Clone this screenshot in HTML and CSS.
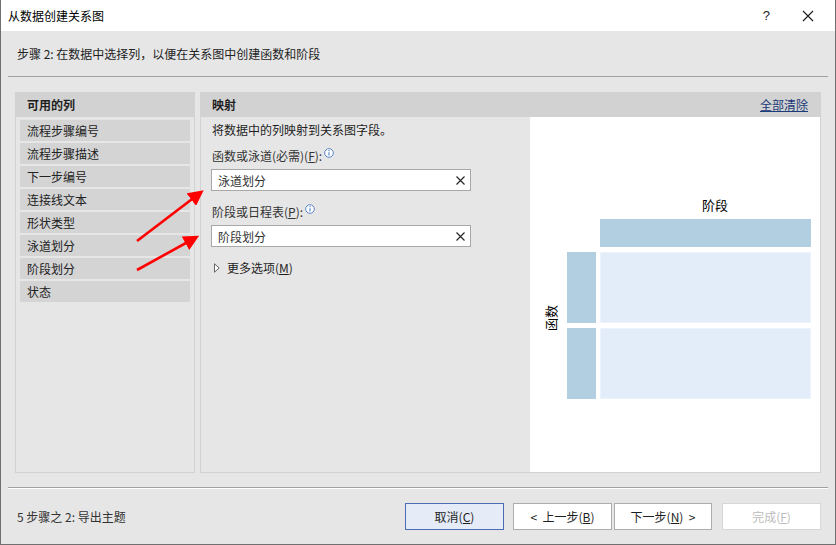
FILE: index.html
```html
<!DOCTYPE html>
<html lang="zh-CN">
<head>
<meta charset="utf-8">
<title>从数据创建关系图</title>
<link rel="stylesheet" href="styles.css">
</head>
<body>
<div class="window">
  <div class="titlebar">
    <div class="title">从数据创建关系图</div>
    <div class="title-actions">
      <span class="help">?</span>
      <svg class="close" width="12" height="12" viewBox="0 0 12 12"><path d="M1 1L11 11M11 1L1 11" stroke="#1a1a1a" stroke-width="1.1" fill="none"/></svg>
    </div>
  </div>
  <div class="step-header">步骤 2: 在数据中选择列，以便在关系图中创建函数和阶段</div>
  <div class="sep"></div>
  <div class="main">
    <div class="panel left-panel">
      <div class="panel-head">可用的列</div>
      <ul class="col-list">
        <li>流程步骤编号</li>
        <li>流程步骤描述</li>
        <li>下一步编号</li>
        <li>连接线文本</li>
        <li>形状类型</li>
        <li>泳道划分</li>
        <li>阶段划分</li>
        <li>状态</li>
      </ul>
    </div>
    <div class="panel right-panel">
      <div class="panel-head map-head"><span>映射</span><a class="clear-all" href="#">全部清除</a></div>
      <div class="map-body">
        <div class="mapping">
          <div class="desc">将数据中的列映射到关系图字段。</div>
          <div class="field-label">函数或泳道(必需)(<u>F</u>):<svg class="info" width="10" height="10" viewBox="0 0 10 10"><circle cx="5" cy="5" r="4.3" fill="#fff" stroke="#4a78c4" stroke-width="0.9"/><path d="M5 4.2V7.6" stroke="#4a78c4" stroke-width="1.1"/><circle cx="5" cy="2.7" r="0.65" fill="#4a78c4"/></svg></div>
          <div class="input"><span>泳道划分</span><svg width="9" height="9" viewBox="0 0 9 9"><path d="M0.5 0.5L8.5 8.5M8.5 0.5L0.5 8.5" stroke="#222" stroke-width="1.1"/></svg></div>
          <div class="field-label second">阶段或日程表(<u>P</u>):<svg class="info" width="10" height="10" viewBox="0 0 10 10"><circle cx="5" cy="5" r="4.3" fill="#fff" stroke="#4a78c4" stroke-width="0.9"/><path d="M5 4.2V7.6" stroke="#4a78c4" stroke-width="1.1"/><circle cx="5" cy="2.7" r="0.65" fill="#4a78c4"/></svg></div>
          <div class="input"><span>阶段划分</span><svg width="9" height="9" viewBox="0 0 9 9"><path d="M0.5 0.5L8.5 8.5M8.5 0.5L0.5 8.5" stroke="#222" stroke-width="1.1"/></svg></div>
          <div class="more"><svg width="6" height="10" viewBox="0 0 6 10"><path d="M0.5 0.8L5.2 5L0.5 9.2Z" fill="#fff" stroke="#555" stroke-width="0.9"/></svg><span>更多选项(<u>M</u>)</span></div>
        </div>
        <div class="preview">
          <div class="phase-label">阶段</div>
          <div class="grid">
            <div class="vlabel"><span>函数</span></div>
            <div class="bar top-bar"></div>
            <div class="bar side1"></div>
            <div class="cell cell1"></div>
            <div class="bar side2"></div>
            <div class="cell cell2"></div>
          </div>
        </div>
      </div>
    </div>
  </div>
  <div class="footer-sep"></div>
  <div class="footer">
    <div class="footer-text">5 步骤之 2: 导出主题</div>
    <div class="buttons">
      <button class="btn primary">取消(<u>C</u>)</button>
      <button class="btn back">&lt; &nbsp;上一步(<u>B</u>)</button>
      <button class="btn next">下一步(<u>N</u>) &nbsp;&gt;</button>
      <button class="btn disabled">完成(<u>F</u>)</button>
    </div>
  </div>
  <svg class="arrows" width="836" height="545" viewBox="0 0 836 545">
    <defs>
      <marker id="ah" markerWidth="6" markerHeight="6" refX="4.2" refY="3" orient="auto" markerUnits="strokeWidth">
        <path d="M0 0L6 3L0 6Z" fill="#ff0000"/>
      </marker>
    </defs>
    <line x1="137" y1="241" x2="200" y2="193" stroke="#ff0000" stroke-width="2.6" marker-end="url(#ah)"/>
    <line x1="137" y1="270" x2="195" y2="238" stroke="#ff0000" stroke-width="2.6" marker-end="url(#ah)"/>
  </svg>
</div>
</body>
</html>
```

FILE: styles.css
```css
* { box-sizing: border-box; }
html, body { margin: 0; padding: 0; }
body {
  width: 836px;
  height: 545px;
  overflow: hidden;
  font-family: "Noto Sans CJK SC", "Noto Sans", "Liberation Sans", sans-serif;
  font-size: 12px;
  color: #1e1e1e;
}
.window {
  position: relative;
  width: 836px;
  height: 545px;
  background: #e6e6e6;
  border-left: 1px solid #707070;
  border-right: 1px solid #707070;
  border-bottom: 1px solid #707070;
}
.titlebar {
  height: 31px;
  background: #fff;
  display: flex;
  align-items: center;
  justify-content: space-between;
  padding-left: 7px;
}
.title { font-size: 12px; line-height: 16px; color: #000; }
.title-actions { display: flex; align-items: center; }
.help { font-size: 13px; color: #222; margin-right: 32px; font-family: "Liberation Sans", sans-serif; }
.close { margin-right: 21px; }
.step-header {
  height: 45px;
  line-height: 45px;
  padding-left: 16px;
  color: #222;
}
.sep { margin: 0 7px; border-top: 1px solid #a0a0a0; }
.main {
  display: flex;
  margin-top: 15px;
  padding-left: 14px;
  height: 381px;
}
.panel { border: 1px solid #d2d2d2; height: 381px; }
.left-panel { width: 180px; }
.right-panel { width: 621px; margin-left: 5px; display: flex; flex-direction: column; }
.panel-head {
  height: 24px;
  line-height: 24px;
  background: #d2d2d2;
  font-weight: bold;
  padding-left: 11px;
  color: #1e1e1e;
}
.map-head { display: flex; justify-content: space-between; }
.clear-all {
  font-weight: normal;
  color: #1b3a78;
  text-decoration: underline;
  margin-right: 12px;
}
.col-list { list-style: none; margin: 3px 0 0 0; padding: 0 4px; }
.col-list li {
  height: 21px;
  line-height: 21px;
  background: #d4d4d4;
  margin-bottom: 2px;
  padding-left: 7px;
  color: #222;
}
.map-body { display: flex; flex: 1; }
.mapping { width: 329px; padding: 4px 0 0 11px; }
.desc { line-height: 18px; }
.field-label { line-height: 18px; margin-top: 8px; display: flex; align-items: center; color: #333; }
.field-label.second { margin-top: 12px; }
.field-label u { text-decoration: underline; }
.info { margin-left: 2px; margin-top: -6px; }
.input {
  width: 260px;
  height: 22px;
  margin-top: 4px;
  margin-left: -1px;
  background: #fff;
  border: 1px solid #a8a8a8;
  display: flex;
  align-items: center;
  justify-content: space-between;
  padding: 0 5px 0 6px;
  color: #333;
}
.more { margin-top: 12px; line-height: 18px; display: flex; align-items: center; padding-left: 2px; }
.more span { margin-left: 7px; }
.preview {
  flex: 1;
  background: #fff;
  padding-top: 80px;
}
.phase-label {
  font-size: 13px;
  line-height: 16px;
  margin-left: 172px;
  margin-bottom: 6px;
  color: #000;
}
.grid {
  display: grid;
  grid-template-columns: 33px 29px 211px;
  grid-template-rows: 28px 71px 71px;
  column-gap: 4px;
  row-gap: 5px;
}
.bar { background: #b1cfe1; }
.top-bar { grid-column: 3; grid-row: 1; }
.side1 { grid-column: 2; grid-row: 2; }
.side2 { grid-column: 2; grid-row: 3; }
.cell { background: #e3ecf9; border: 1px solid #ecf3fc; }
.cell1 { grid-column: 3; grid-row: 2; }
.cell2 { grid-column: 3; grid-row: 3; }
.vlabel {
  grid-column: 1;
  grid-row: 2 / 4;
  display: flex;
  align-items: center;
  justify-content: flex-end;
  padding-bottom: 14px;
  padding-right: 5px;
}
.vlabel span {
  writing-mode: vertical-rl;
  text-orientation: sideways;
  transform: rotate(180deg);
  font-size: 13px;
  color: #000;
  line-height: 15px;
}
.footer-sep {
  margin: 14px 7px 0 7px;
  border-top: 1px solid #a0a0a0;
  border-bottom: 1px solid #fff;
}
.footer {
  display: flex;
  justify-content: space-between;
  align-items: center;
  padding: 14px 14px 0 16px;
}
.footer-text { color: #333; }
.buttons { display: flex; }
.btn {
  height: 27px;
  font-family: inherit;
  font-size: 12px;
  background: #fff;
  border: 1px solid #adadad;
  color: #1e1e1e;
  padding: 0;
}
.btn.primary { width: 99px; background: #e5ebf7; border-color: #4b6cb7; }
.btn.back { width: 99px; margin-left: 9px; }
.btn.next { width: 98px; margin-left: 2px; }
.btn.disabled { width: 99px; margin-left: 10px; color: #bcbcbc; border-color: #d6d6d6; }
.arrows { position: absolute; left: -1px; top: 0; pointer-events: none; }
```
